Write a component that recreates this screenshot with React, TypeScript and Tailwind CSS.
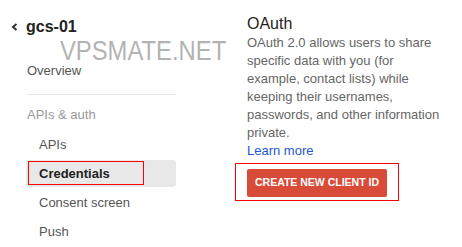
const navItems = ["APIs", "Credentials", "Consent screen", "Push"];

function Chevron() {
  return (
    <svg width="7" height="8" viewBox="0 0 7 8" className="block">
      <polyline points="5.5,1 2,4 5.5,7" fill="none" stroke="#333" strokeWidth="2" />
    </svg>
  );
}

function Sidebar() {
  return (
    <div className="w-[176px] shrink-0">
      <div className="flex items-center h-[20px] mt-[17px] pl-[11px]">
        <Chevron />
        <span className="ml-[8px] text-[16px] leading-[20px] font-bold text-[#222]">gcs-01</span>
      </div>
      <div className="pl-[27px] mt-[24px] text-[13px] leading-[20px] text-[#555]">Overview</div>
      <div className="ml-[27px] mt-[13px] h-px bg-[#e5e5e5]" />
      <div className="pl-[27px] mt-[10px] text-[13px] leading-[20px] text-[#999]">APIs &amp; auth</div>
      <div className="mt-[6px] ml-[26px] flex flex-col gap-[2px]">
        {navItems.map((item) =>
          item === "Credentials" ? (
            <div
              key={item}
              className="relative h-[27px] leading-[27px] pl-[13px] text-[13px] font-bold text-[#222] bg-[#e8e8e8] rounded-[3px]"
            >
              {item}
              <div className="absolute left-[2px] top-[1px] w-[116px] h-[24px] border border-[#ff0000]" />
            </div>
          ) : (
            <div key={item} className="h-[27px] leading-[27px] pl-[13px] text-[13px] text-[#555]">
              {item}
            </div>
          )
        )}
      </div>
    </div>
  );
}

function OAuthPanel() {
  return (
    <div className="ml-[71px] w-[198px] pt-[14px]">
      <h2 className="text-[16px] leading-[20px] text-[#222]">OAuth</h2>
      <p className="text-[13px] leading-[18px] text-[#666]">
        OAuth 2.0 allows users to share specific data with you (for example, contact lists) while keeping their
        usernames, passwords, and other information private.
        <br />
        <a className="text-[#1a56d6]">Learn more</a>
      </p>
      <div className="relative mt-[9px] w-[140px]">
        <button className="w-[140px] h-[28px] rounded-[2px] bg-[#d84b38] text-white text-[10.5px] font-bold">
          CREATE NEW CLIENT ID
        </button>
        <div className="absolute -left-[12px] -right-[12px] -top-[6px] -bottom-[4px] border border-[#ff0000]" />
      </div>
    </div>
  );
}

export default function App() {
  return (
    <div
      className="relative w-[462px] h-[247px] bg-white overflow-hidden flex"
      style={{ fontFamily: '"Liberation Sans", Arial, sans-serif' }}
    >
      <Sidebar />
      <OAuthPanel />
      <div className="absolute left-[60px] top-[37px] origin-left scale-x-[0.85] text-[28px] leading-[28px] text-[#b3b3b3] pointer-events-none whitespace-nowrap">
        VPSMATE.NET
      </div>
    </div>
  );
}
